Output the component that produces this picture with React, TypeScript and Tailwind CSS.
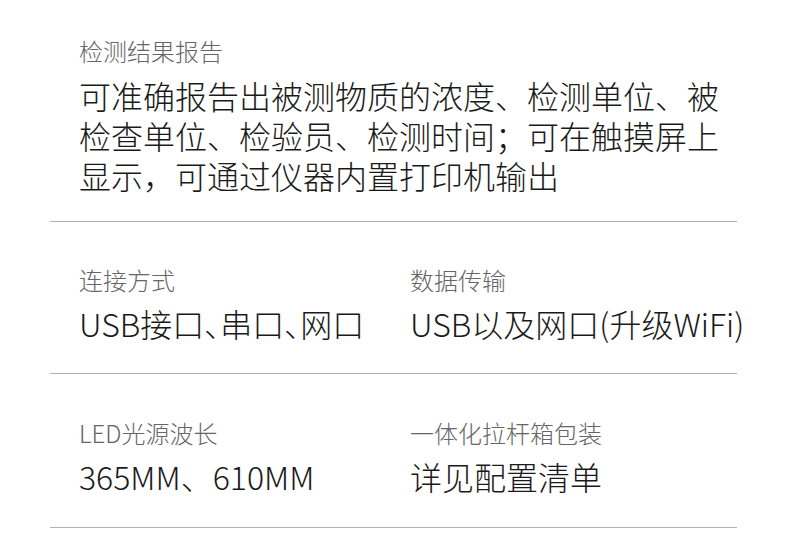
const specs = [
  [
    { label: "连接方式", value: "USB接口、串口、网口" },
    { label: "数据传输", value: "USB以及网口(升级WiFi)" },
  ],
  [
    { label: "LED光源波长", value: "365MM、610MM", full: true },
    { label: "一体化拉杆箱包装", value: "详见配置清单" },
  ],
];

export default function App() {
  return (
    <div className="w-[790px] h-[556px] bg-white font-['Noto_Sans_CJK_SC',sans-serif]">
      <div className="ml-[50px] w-[687px]">
        {/* Report */}
        <section className="pl-[29px] pr-[8px] pt-[39px] pb-[26px] border-b border-[#b4b4b4]">
          <p className="text-[24px] leading-[24px] font-extralight text-[#666]">检测结果报告</p>
          <p className="mt-[12px] text-[32px] leading-[40px] font-light text-[#1a1a1a]">
            可准确报告出被测物质的浓度、检测单位、被
            <br />
            检查单位、检验员、检测时间；可在触摸屏上
            <br />
            显示，可通过仪器内置打印机输出
          </p>
        </section>

        {/* Spec rows */}
        {specs.map((row, i) => (
          <section
            key={i}
            className={
              i === 0
                ? "grid grid-cols-[331px_1fr] pl-[29px] pt-[46px] pb-[30px] border-b border-[#b4b4b4]"
                : "grid grid-cols-[331px_1fr] pl-[29px] pt-[47px] pb-[31px] border-b border-[#b4b4b4]"
            }
          >
            {row.map((item) => (
              <div key={item.label}>
                <p className="text-[24px] leading-[24px] font-extralight text-[#666]">{item.label}</p>
                <p
                  className={
                    item.full
                      ? "mt-[11px] text-[32px] leading-[40px] font-light text-[#1a1a1a] whitespace-nowrap"
                      : "mt-[11px] text-[32px] leading-[40px] font-light text-[#1a1a1a] whitespace-nowrap [font-feature-settings:'palt']"
                  }
                >
                  {item.value}
                </p>
              </div>
            ))}
          </section>
        ))}
      </div>
    </div>
  );
}
